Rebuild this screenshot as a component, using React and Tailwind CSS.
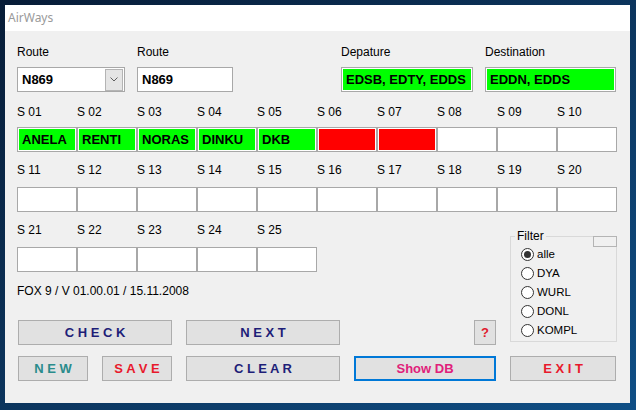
import React from 'react';

const font = { fontFamily: '"Liberation Sans", Arial, sans-serif' };

const row1 = [
  { label: 'S 01', value: 'ANELA', color: 'green' },
  { label: 'S 02', value: 'RENTI', color: 'green' },
  { label: 'S 03', value: 'NORAS', color: 'green' },
  { label: 'S 04', value: 'DINKU', color: 'green' },
  { label: 'S 05', value: 'DKB', color: 'green' },
  { label: 'S 06', value: '', color: 'red' },
  { label: 'S 07', value: '', color: 'red' },
  { label: 'S 08', value: '' },
  { label: 'S 09', value: '' },
  { label: 'S 10', value: '' },
];

const row2 = ['S 11', 'S 12', 'S 13', 'S 14', 'S 15', 'S 16', 'S 17', 'S 18', 'S 19', 'S 20'];
const row3 = ['S 21', 'S 22', 'S 23', 'S 24', 'S 25'];
const filters = ['alle', 'DYA', 'WURL', 'DONL', 'KOMPL'];

function Cell({ value, color }) {
  let bg = 'bg-white';
  if (color === 'green') bg = 'bg-[#00ff00] shadow-[inset_0_0_0_1px_#ffffff]';
  if (color === 'red') bg = 'bg-[#ff0000] shadow-[inset_0_0_0_1px_#ffffff]';
  return (
    <div className={`w-[60px] h-[25px] border border-[#a8a8a8] flex items-center pl-[4px] text-[13px] font-bold text-black ${bg}`}>
      {value}
    </div>
  );
}

function Labels({ items }) {
  return (
    <div className="flex h-[14px] leading-[14px] text-[12px] text-black">
      {items.map((l) => (
        <div key={l} className="w-[60px]">{l}</div>
      ))}
    </div>
  );
}

function Btn({ children, className = '', color = 'text-[#1e1e78]' }) {
  return (
    <div className={`h-[25px] bg-[#e1e1e1] border border-[#adadad] flex items-center justify-center text-[13px] font-bold ${color} ${className}`}>
      {children}
    </div>
  );
}

export default function App() {
  return (
    <div className="w-[636px] h-[410px] bg-gradient-to-br from-[#071c37] to-[#0f4f86] pt-[5px] pl-[5px] overflow-hidden" style={font}>
      <div className="w-[625px] h-[398px] bg-[#f0f0f0] flex flex-col">
        {/* title bar */}
        <div className="h-[26px] bg-white flex items-center pl-[3px] text-[12px] text-[#9a9a9a]" style={{ fontFamily: '"Noto Sans", "Open Sans", sans-serif' }}>
          AirWays
        </div>

        <div className="pl-[12px] pt-[14px] flex flex-col">
          {/* route row */}
          <div className="flex h-[14px] leading-[14px] text-[12px] text-black">
            <div className="w-[120px]">Route</div>
            <div className="w-[204px]">Route</div>
            <div className="w-[144px]">Depature</div>
            <div>Destination</div>
          </div>
          <div className="flex mt-[8px] h-[25px]">
            <div className="w-[108px] h-[25px] bg-white border border-[#a8a8a8] flex items-center justify-between">
              <span className="pl-[4px] text-[13px] font-bold text-black">N869</span>
              <div className="w-[18px] h-[22px] mr-[1px] bg-[#e5e5e5] border border-[#b4b4b4] flex items-center justify-center">
                <svg width="8" height="5" viewBox="0 0 8 5">
                  <path d="M0.5 0.5 L4 4 L7.5 0.5" fill="none" stroke="#606060" strokeWidth="1" />
                </svg>
              </div>
            </div>
            <div className="ml-[12px] w-[96px] h-[25px] bg-white border border-[#a8a8a8] flex items-center pl-[4px] text-[13px] font-bold text-black">
              N869
            </div>
            <div className="ml-[108px] w-[132px] h-[25px] bg-[#00ff00] border border-[#a8a8a8] shadow-[inset_0_0_0_1px_#ffffff] flex items-center pl-[4px] text-[13px] font-bold text-black">
              EDSB, EDTY, EDDS
            </div>
            <div className="ml-[12px] w-[131px] h-[25px] bg-[#00ff00] border border-[#a8a8a8] shadow-[inset_0_0_0_1px_#ffffff] flex items-center pl-[4px] text-[13px] font-bold text-black">
              EDDN, EDDS
            </div>
          </div>

          {/* row 1 */}
          <div className="mt-[13px]">
            <Labels items={row1.map((c) => c.label)} />
          </div>
          <div className="flex mt-[8px]">
            {row1.map((c) => (
              <Cell key={c.label} value={c.value} color={c.color} />
            ))}
          </div>

          {/* row 2 */}
          <div className="mt-[11px]">
            <Labels items={row2} />
          </div>
          <div className="flex mt-[10px]">
            {row2.map((l) => (
              <Cell key={l} value="" />
            ))}
          </div>

          {/* bottom area */}
          <div className="flex mt-[11px]">
            <div className="w-[479px] flex flex-col">
              <Labels items={row3} />
              <div className="flex mt-[10px]">
                {row3.map((l) => (
                  <Cell key={l} value="" />
                ))}
              </div>
              <div className="mt-[12px] h-[14px] leading-[14px] text-[12px] text-black">FOX 9 / V 01.00.01 / 15.11.2008</div>
              <div className="flex mt-[22px] pl-[1px]">
                <Btn className="w-[154px]">C H E C K</Btn>
                <Btn className="w-[154px] ml-[14px]">N E X T</Btn>
                <Btn className="w-[22px] ml-auto" color="text-[#e0182c]">?</Btn>
              </div>
              <div className="flex mt-[11px] pl-[1px]">
                <Btn className="w-[70px]" color="text-[#2a8c8c]">N E W</Btn>
                <Btn className="w-[70px] ml-[14px]" color="text-[#e8192c]">S A V E</Btn>
                <Btn className="w-[154px] ml-[14px]">C L E A R</Btn>
                <div className="w-[142px] ml-[14px] h-[25px] bg-[#e1e1e1] border-2 border-[#0078d7] flex items-center justify-center text-[13px] font-bold text-[#e0207a]">
                  Show DB
                </div>
              </div>
            </div>

            <div className="ml-[14px] flex flex-col">
              <fieldset className="relative mt-[6px] w-[107px] h-[113px] border border-[#d9d9d9] pl-[10px] pt-[2px]">
                <legend className="-ml-[6px] px-[2px] h-[14px] leading-[14px] text-[12px] text-black">Filter</legend>
                <div className="absolute top-[-7px] right-[-1px] w-[24px] h-[11px] border border-[#b4b4b4] bg-[#f0f0f0]" />
                {filters.map((f, i) => (
                  <div key={f} className="flex items-center h-[19px] text-[11.5px] text-black">
                    <div className="w-[13px] h-[13px] rounded-full border border-[#333333] bg-white flex items-center justify-center">
                      {i === 0 && <div className="w-[7px] h-[7px] rounded-full bg-[#333333]" />}
                    </div>
                    <span className="ml-[3px]">{f}</span>
                  </div>
                ))}
              </fieldset>
              <Btn className="w-[106px] mt-[14px]" color="text-[#e8192c]">E X I T</Btn>
            </div>
          </div>
        </div>
      </div>
    </div>
  );
}
